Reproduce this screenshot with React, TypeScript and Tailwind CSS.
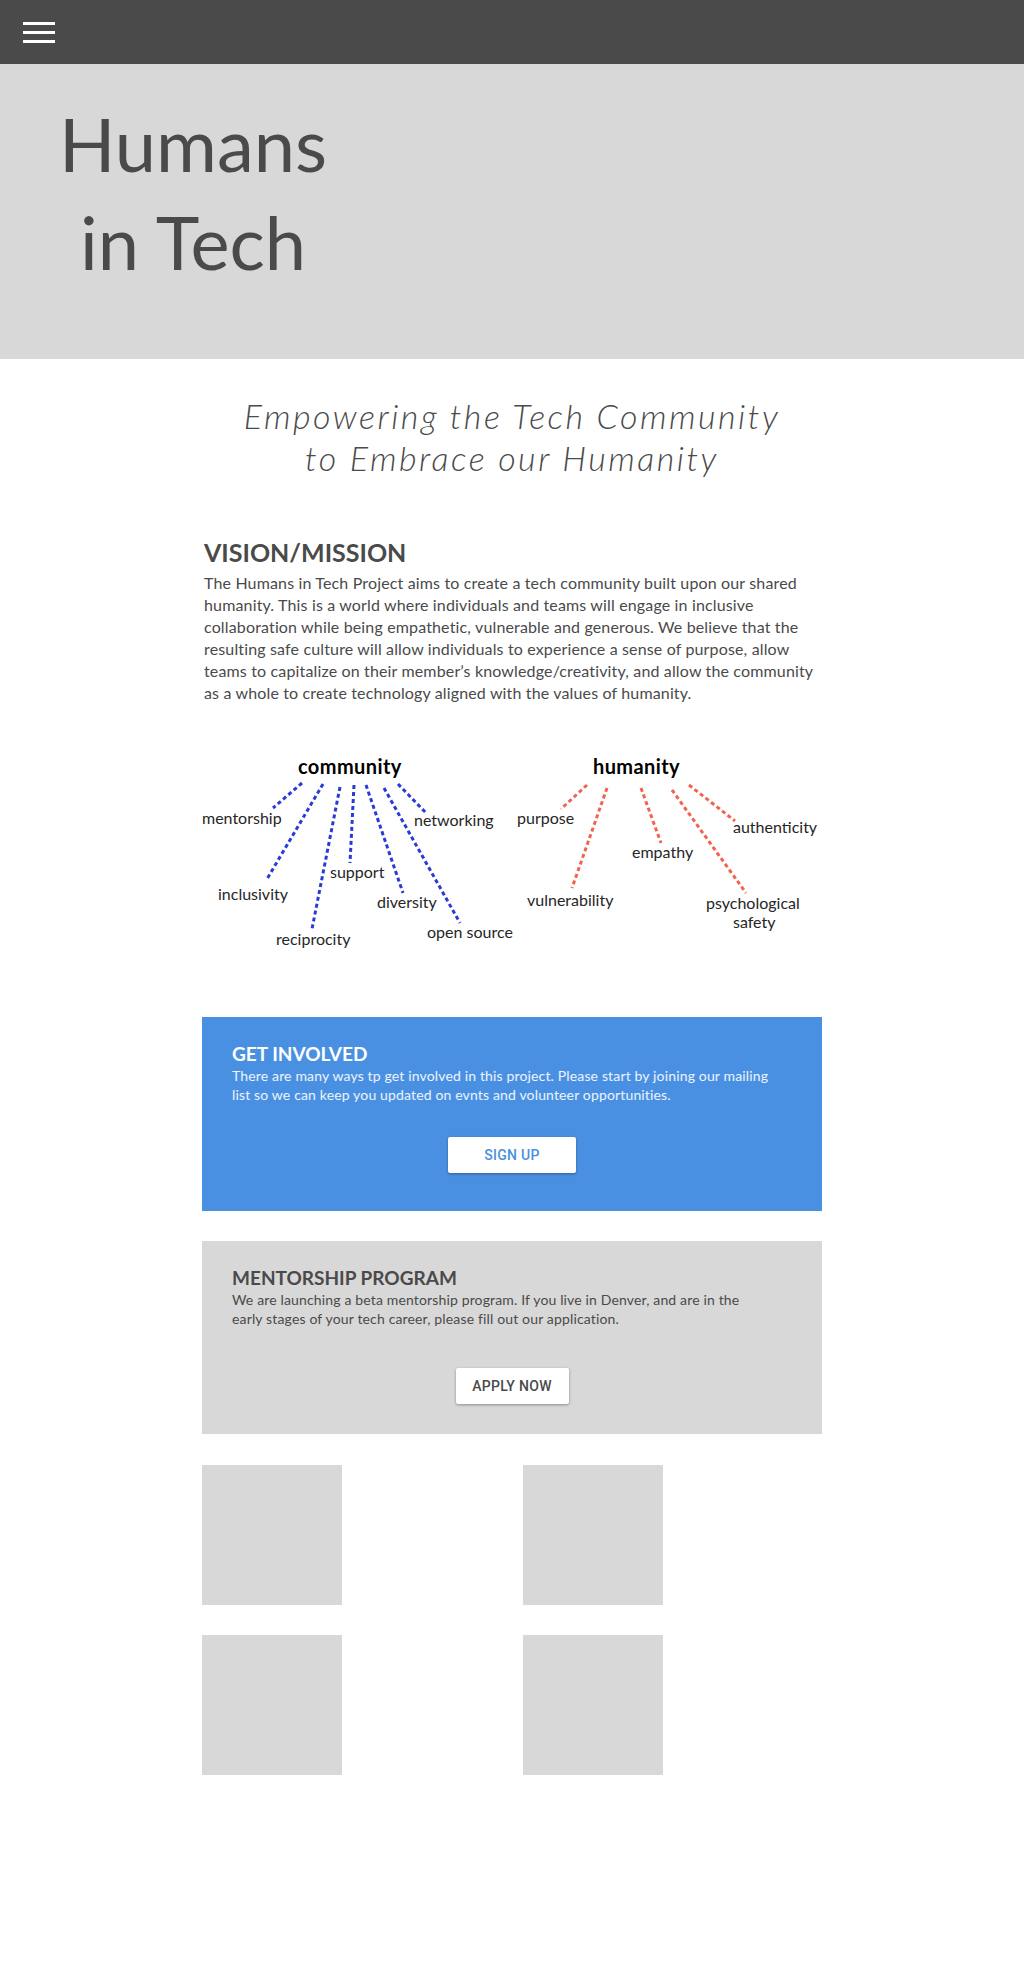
import React from 'react'

const BLUE_LINES = [
  [100, 32, 71, 57],
  [121, 33, 65, 128],
  [138, 36, 110, 178],
  [152, 34, 148, 112],
  [164, 34, 201, 142],
  [182, 37, 258, 172],
  [196, 33, 225, 63],
]

const RED_LINES = [
  [385, 34, 359, 58],
  [405, 37, 370, 137],
  [439, 37, 459, 92],
  [470, 39, 544, 142],
  [487, 34, 533, 70],
]

const LABELS: { t: string; x: number; y: number }[] = [
  { t: 'mentorship', x: 0, y: 73 },
  { t: 'networking', x: 212, y: 75 },
  { t: 'support', x: 128, y: 127 },
  { t: 'inclusivity', x: 16, y: 149 },
  { t: 'diversity', x: 175, y: 157 },
  { t: 'reciprocity', x: 74, y: 194 },
  { t: 'open source', x: 225, y: 187 },
  { t: 'purpose', x: 315, y: 73 },
  { t: 'authenticity', x: 531, y: 82 },
  { t: 'empathy', x: 430, y: 107 },
  { t: 'vulnerability', x: 325, y: 155 },
  { t: 'psychological', x: 504, y: 158 },
  { t: 'safety', x: 531, y: 177 },
]

function ValuesDiagram() {
  return (
    <svg width="622" height="210" viewBox="0 0 622 210" className="block overflow-visible">
      <g strokeWidth="3" strokeDasharray="4 3" fill="none">
        {BLUE_LINES.map(([x1, y1, x2, y2], i) => (
          <line key={`b${i}`} x1={x1} y1={y1} x2={x2} y2={y2} stroke="#2a3ad8" />
        ))}
        {RED_LINES.map(([x1, y1, x2, y2], i) => (
          <line key={`r${i}`} x1={x1} y1={y1} x2={x2} y2={y2} stroke="#f2634f" />
        ))}
      </g>
      <g fontFamily="Lato, sans-serif">
        <text x="96" y="23" fontSize="20" fontWeight="700" fill="#000" letterSpacing="0.4">community</text>
        <text x="391" y="23" fontSize="20" fontWeight="700" fill="#000" letterSpacing="0.4">humanity</text>
        {LABELS.map((l) => (
          <text key={l.t} x={l.x} y={l.y} fontSize="16" fill="#262626">{l.t}</text>
        ))}
      </g>
    </svg>
  )
}

function Card({
  title,
  lines,
  button,
  tone,
}: {
  title: string
  lines: string[]
  button: string
  tone: 'blue' | 'gray'
}) {
  const blue = tone === 'blue'
  return (
    <section
      className={
        blue
          ? 'bg-[#4a90e2] pt-[25px] pb-[38px] px-[30px]'
          : 'bg-[#d8d8d8] pt-[25px] pb-[30px] px-[30px]'
      }
    >
      <h3 className={`text-[19px] leading-[24px] font-bold ${blue ? 'text-white' : 'text-[#4a4a4a]'}`}>
        {title}
      </h3>
      <p className={`text-[14px] leading-[19px] tracking-[0.15px] ${blue ? 'text-white/90' : 'text-[#4a4a4a]'}`}>
        {lines.map((l, i) => (
          <span key={i} className="block">{l}</span>
        ))}
      </p>
      <div className={`flex justify-center ${blue ? 'mt-[33px]' : 'mt-[40px]'}`}>
        <button
          className={`h-9 rounded-[2px] bg-white shadow-[0_1px_3px_rgba(0,0,0,0.35)] font-['Roboto',sans-serif] font-medium text-[14px] tracking-[0.3px] uppercase ${
            blue ? 'w-[128px] text-[#4a90e2]' : 'w-[113px] text-[#4a4a4a]'
          }`}
        >
          {button}
        </button>
      </div>
    </section>
  )
}

export default function App() {
  return (
    <div className="min-h-[1982px] w-full bg-white font-['Lato',sans-serif] text-[#4a4a4a]">
      <header className="h-16 bg-[#4a4a4a] flex items-center pl-[23px]">
        <div className="flex flex-col gap-[6px]" aria-label="Menu">
          <span className="block h-[3px] w-8 bg-white" />
          <span className="block h-[3px] w-8 bg-white" />
          <span className="block h-[3px] w-8 bg-white" />
        </div>
      </header>

      <div className="h-[295px] bg-[#d8d8d8] pt-[31px] pl-[59px]">
        <h1 className="text-[74px] leading-[98px] font-normal text-[#4a4a4a]">
          <span className="block">Humans</span>
          <span className="block pl-[21px]">in Tech</span>
        </h1>
      </div>

      <main className="w-[620px] mx-auto">
        <h2 className="mt-[36px] -mx-[40px] text-center text-[34px] leading-[42px] font-light italic tracking-[2.5px] text-[#4a4a4a]">
          Empowering the Tech Community
          <br />
          to Embrace our Humanity
        </h2>

        <div className="pl-[2px]">
          <h3 className="mt-[58px] text-[25px] leading-[30px] font-bold text-[#4a4a4a]">VISION/MISSION</h3>
          <p className="mt-[5px] text-[16px] leading-[22px] tracking-[0.15px] text-[#4a4a4a]">
            <span className="block">The Humans in Tech Project aims to create a tech community built upon our shared</span>
            <span className="block">humanity. This is a world where individuals and teams will engage in inclusive</span>
            <span className="block">collaboration while being empathetic, vulnerable and generous. We believe that the</span>
            <span className="block">resulting safe culture will allow individuals to experience a sense of purpose, allow</span>
            <span className="block">teams to capitalize on their member’s knowledge/creativity, and allow the community</span>
            <span className="block">as a whole to create technology aligned with the values of humanity.</span>
          </p>
        </div>

        <div className="mt-[47px]">
          <ValuesDiagram />
        </div>

        <div className="mt-[56px] flex flex-col gap-[30px]">
          <Card
            tone="blue"
            title="GET INVOLVED"
            lines={[
              'There are many ways tp get involved in this project. Please start by joining our mailing',
              'list so we can keep you updated on evnts and volunteer opportunities.',
            ]}
            button="Sign up"
          />
          <Card
            tone="gray"
            title="MENTORSHIP PROGRAM"
            lines={[
              'We are launching a beta mentorship program. If you live in Denver, and are in the',
              'early stages of your tech career, please fill out our application.',
            ]}
            button="Apply now"
          />
        </div>

        <div className="mt-[31px] grid grid-cols-[321px_140px] gap-y-[30px]">
          <div className="h-[140px] w-[140px] bg-[#d8d8d8]" />
          <div className="h-[140px] w-[140px] bg-[#d8d8d8]" />
          <div className="h-[140px] w-[140px] bg-[#d8d8d8]" />
          <div className="h-[140px] w-[140px] bg-[#d8d8d8]" />
        </div>
      </main>
    </div>
  )
}
